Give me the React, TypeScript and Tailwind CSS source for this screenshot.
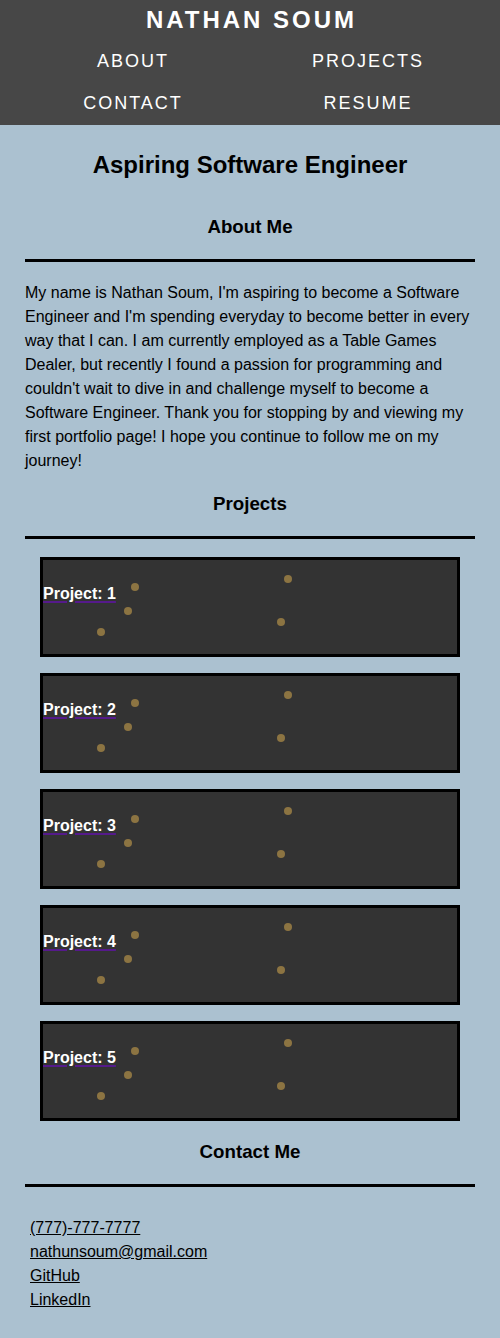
import React from "react"

const dots = [
  { x: 95, y: 29 },
  { x: 88, y: 53 },
  { x: 61, y: 74 },
  { x: 248, y: 21 },
  { x: 241, y: 64 },
]

function ProjectCard({ n }: { n: number }) {
  return (
    <div className="relative h-[100px] border-[3px] border-black bg-[#333333]">
      <a className="absolute left-0 top-[22px] text-[16px] font-bold leading-[24px] text-white underline decoration-[#551a8b] decoration-[1.5px] underline-offset-[2px]">
        Project: {n}
      </a>
      {dots.map((d, i) => (
        <span
          key={i}
          className="absolute h-[8px] w-[8px] -translate-x-1/2 -translate-y-1/2 rounded-full bg-[#8c7442]"
          style={{ left: d.x - 3, top: d.y - 2 }}
        />
      ))}
    </div>
  )
}

function SectionTitle({ children }: { children: React.ReactNode }) {
  return (
    <>
      <h3 className="text-center text-[18.72px] font-bold leading-[24px] text-black">{children}</h3>
      <hr className="mt-[20px] h-[3px] border-0 bg-black" />
    </>
  )
}

export default function App() {
  return (
    <div className="min-h-[1338px] bg-[#abc1d0] font-['Liberation_Sans',Arial,sans-serif]">
      <header className="bg-[#474747] pb-[1px] text-white">
        <div className="flex h-[40px] items-center justify-center">
          <h1 className="pl-[3px] text-[24px] font-bold tracking-[3px]">NATHAN SOUM</h1>
        </div>
        <nav className="grid grid-cols-2 px-[15px]">
          {["ABOUT", "PROJECTS", "CONTACT", "RESUME"].map((item) => (
            <a key={item} className="flex h-[42px] items-center justify-center pl-[1px] text-[18px] tracking-[2px]">
              {item}
            </a>
          ))}
        </nav>
      </header>

      <main className="px-[25px] pb-[26px] pt-[26px] text-black">
        <h2 className="text-center text-[24px] font-bold leading-[28px]">Aspiring Software Engineer</h2>

        <section className="mt-[36px]">
          <SectionTitle>About Me</SectionTitle>
          <p className="mt-[19px] text-[16px] leading-[24px]">
            My name is Nathan Soum, I'm aspiring to become a Software Engineer and I'm spending everyday to become
            better in every way that I can. I am currently employed as a Table Games Dealer, but recently I found a
            passion for programming and couldn't wait to dive in and challenge myself to become a Software Engineer.
            Thank you for stopping by and viewing my first portfolio page! I hope you continue to follow me on my
            journey!
          </p>
        </section>

        <section className="mt-[19px]">
          <SectionTitle>Projects</SectionTitle>
          <div className="mt-[18px] flex flex-col gap-[16px] px-[15px]">
            {[1, 2, 3, 4, 5].map((n) => (
              <ProjectCard key={n} n={n} />
            ))}
          </div>
        </section>

        <section className="mt-[19px]">
          <SectionTitle>Contact Me</SectionTitle>
          <ul className="mt-[29px] flex flex-col pl-[5px] text-[16px] leading-[24px]">
            <li><a className="underline">(777)-777-7777</a></li>
            <li><a className="underline">nathunsoum@gmail.com</a></li>
            <li><a className="underline">GitHub</a></li>
            <li><a className="underline">LinkedIn</a></li>
          </ul>
        </section>
      </main>
    </div>
  )
}
